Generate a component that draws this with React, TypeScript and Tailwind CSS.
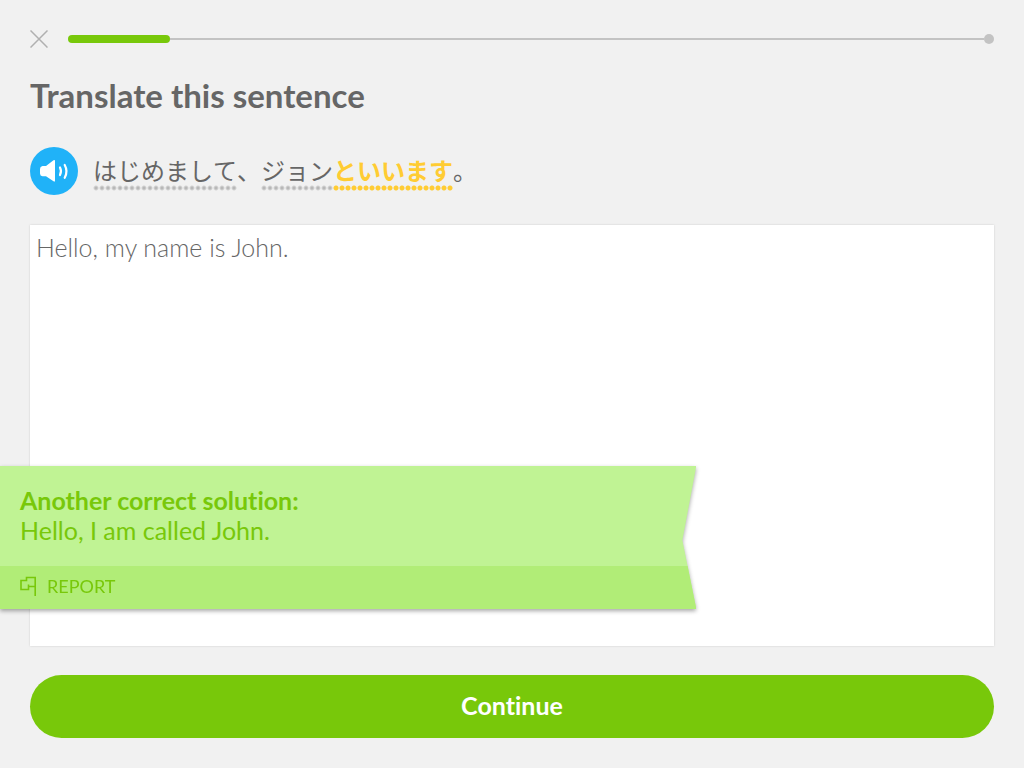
import React from "react";

const dots = "bg-[length:6px_6px] bg-repeat-x bg-bottom-left pb-[4px]";
const grayDots =
  "bg-[radial-gradient(circle_at_center,#b8b8b8_1px,transparent_3px)]";
const yellowDots =
  "bg-[radial-gradient(circle_at_center,#ffcc33_2px,transparent_3px)]";

function SpeakerButton() {
  return (
    <button
      type="button"
      aria-label="Play sentence"
      className="size-12 shrink-0 rounded-full bg-[#20b2f8]"
    >
      <svg viewBox="0 0 48 48" className="size-12" aria-hidden="true">
        <path
          d="M10 22Q10 19.300 12.500 19H16L23.500 13.300Q25 12.200 25 14V33.500Q25 35.400 23.500 34.200L16 29.300H12.500Q10 29 10 26.500Z"
          fill="#fff"
        />
        <path
          d="M30 20.500Q32 24.300 30 28M34.700 18Q38.300 24.300 34.700 30.800"
          fill="none"
          stroke="#fff"
          strokeWidth="2.200"
          strokeLinecap="round"
        />
      </svg>
    </button>
  );
}

function Progress() {
  return (
    <div
      role="progressbar"
      aria-label="Lesson progress"
      aria-valuenow={11}
      aria-valuemin={0}
      aria-valuemax={100}
      className="flex h-5 flex-1 items-center"
    >
      <div className="h-2 w-[11%] rounded-full bg-[#78c80a]" />
      <div className="h-[2px] flex-1 bg-[#c3c3c3]" />
      <div className="size-[10px] rounded-full bg-[#c3c3c3]" />
    </div>
  );
}

function Feedback() {
  return (
    <section
      aria-label="Feedback"
      className="absolute bottom-[37px] left-0 w-[68%] drop-shadow-[0_2px_2px_rgba(0,0,0,0.35)]"
    >
      <div className="bg-[#c0f394] text-[#78c80a] [clip-path:polygon(0_0,100%_0,98%_52%,100%_100%,0_100%)]">
        <div className="px-5 pt-[19px] pb-[21px] text-[25px] leading-[30px]">
          <h2 className="font-bold">Another correct solution:</h2>
          <p>Hello, I am called John.</p>
        </div>
        <div className="bg-[#b1ed77] px-5 pb-[3px]">
          <button type="button" className="flex h-10 items-center gap-[10px] text-lg">
            <svg viewBox="0 0 17 20" className="h-5 w-[17px]" fill="none" stroke="currentColor" strokeWidth="1.600" aria-hidden="true">
              <path d="M15.200 20V1.500H6.500V4.500H1V13.500H8.500V10.500H15.200M8.500 10.500V8.500" />
            </svg>
            REPORT
          </button>
        </div>
      </div>
    </section>
  );
}

export default function App() {
  return (
    <main className="flex min-h-screen flex-col bg-[#f1f1f1] px-[30px] pt-[29px] pb-[30px] font-['Lato',sans-serif] text-[#666666] [font-variant-ligatures:none]">
      <header className="flex items-center gap-5">
        <button type="button" aria-label="Close" className="size-[18px]">
          <svg viewBox="0 0 18 18" className="size-[18px]" stroke="#b0b0b0" strokeWidth="1.500" aria-hidden="true">
            <path d="M0.500 0.500L17.500 17.500M17.500 0.500L0.500 17.500" />
          </svg>
        </button>
        <Progress />
      </header>

      <h1 className="mt-[26px] text-[33px] leading-10 font-bold">Translate this sentence</h1>

      <div className="mt-8 flex items-center gap-[15px]">
        <SpeakerButton />
        <p
          lang="ja"
          className="pb-[3px] font-['Noto_Sans_CJK_JP',sans-serif] text-2xl leading-[36px] [font-kerning:none]"
        >
          <span className={`${dots} ${grayDots}`}>はじめまして</span>、
          <span className={`${dots} ${grayDots}`}>ジョン</span>
          <span className={`${dots} ${yellowDots} font-bold text-[#ffcc33]`}>といいます</span>。
        </p>
      </div>

      <div className="relative -mx-[30px] mt-[30px] flex flex-1 px-[30px]">
        <textarea
          aria-label="Your translation"
          defaultValue="Hello, my name is John."
          className="block flex-1 resize-none bg-white px-[6px] py-[7px] text-[25px] leading-[30px] font-light shadow-[0_0_2px_rgba(0,0,0,0.15)] outline-none"
        />
        <Feedback />
      </div>

      <button
        type="button"
        className="mt-[29px] h-[63px] rounded-full bg-[#78c80a] pb-[2px] text-[25px] font-bold text-white"
      >
        Continue
      </button>
    </main>
  );
}
